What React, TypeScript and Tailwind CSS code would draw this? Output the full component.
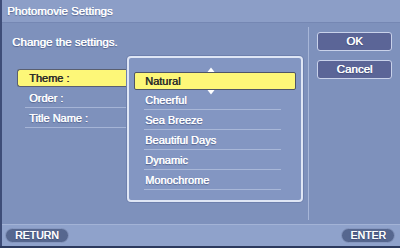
import React from "react";

const font = { fontFamily: '"Liberation Sans", Arial, sans-serif' };
const wt = "[text-shadow:0.45px_0_0_#ffffff,0_1px_1px_rgba(40,50,90,0.55)]";
const wtDark = "[text-shadow:0.45px_0_0_#2a2a2a]";

export default function App() {
  const themes = ["Natural", "Cheerful", "Sea Breeze", "Beautiful Days", "Dynamic", "Monochrome"];
  return (
    <div style={font} className="w-[400px] h-[248px] bg-[#2c3a5e] overflow-hidden">
      <div className="w-[400px] h-[246px] flex flex-col bg-[#7e91bc] border-l-2 border-[#3e4d78]">
        {/* title */}
        <div className={`h-[23px] bg-[#8c9ec7] border-b border-[#7587b3] flex items-center pl-[5px] pt-[2px] text-[11.5px] text-white ${wt}`}>
          Photomovie Settings
        </div>
        <div className="flex flex-1">
          {/* main area */}
          <div className="w-[306px] relative">
            <div className={`pl-[10px] pt-[11px] text-[11.5px] text-white ${wt}`}>Change the settings.</div>
            <div className="mt-[18px] ml-[15px] w-[110px] flex flex-col">
              <div className={`h-[18px] bg-[#fdf778] rounded-l-[3px] border border-[#5a5f70] border-r-0 flex items-center pl-[11px] text-[11px] text-[#2a2a2a] ${wtDark}`}>
                Theme :
              </div>
              <div className={`h-[20px] mt-[1px] ml-[8px] border-b border-[#a5b4d6] flex items-center pl-[4px] text-[11px] text-white ${wt}`}>Order :</div>
              <div className={`h-[20px] ml-[8px] border-b border-[#a5b4d6] flex items-center pl-[4px] text-[11px] text-white ${wt}`}>Title Name :</div>
            </div>
            {/* dropdown */}
            <div className="absolute left-[125px] top-[33px] w-[176px] h-[146px] rounded-[4px] border-2 border-[#dfe6f5] bg-[#8396c2] shadow-[0_0_0_1px_#6e80ad] pt-[14px] px-[5px]">
              <div className={`relative h-[18px] bg-[#fdf778] border border-[#4f5566] rounded-[2px] flex items-center pl-[10px] text-[11px] text-[#2a2a2a] ${wtDark}`}>
                Natural
                <svg className="absolute left-[72px] -top-[6px]" width="8" height="5" viewBox="0 0 8 5">
                  <path d="M0.5 5 L4 0.5 L7.5 5 Z" fill="#ffffff" />
                </svg>
                <svg className="absolute left-[72px] -bottom-[6px]" width="8" height="5" viewBox="0 0 8 5">
                  <path d="M0.5 0 L4 4.5 L7.5 0 Z" fill="#ffffff" />
                </svg>
              </div>
              {themes.slice(1).map((t) => (
                <div key={t} className={`h-[20px] ml-[10px] mr-[15px] border-b border-[#a8b7d8] flex items-center pl-[1px] pt-[1px] text-[11px] text-white ${wt}`}>
                  {t}
                </div>
              ))}
            </div>
          </div>
          {/* separator */}
          <div className="w-px bg-[#a7b6d8] mb-[4px] mt-[4px]" />
          {/* buttons */}
          <div className="flex flex-col pl-[8px] pt-[9px] gap-[9px]">
            <div className={`w-[75px] h-[19px] rounded-[3px] bg-[#5b6597] border border-[#c9d2ea] flex items-center justify-center text-[11.5px] text-white ${wt}`}>OK</div>
            <div className={`w-[75px] h-[19px] rounded-[3px] bg-[#5b6597] border border-[#c9d2ea] flex items-center justify-center text-[11.5px] text-white ${wt}`}>Cancel</div>
          </div>
        </div>
        {/* bottom bar */}
        <div className="h-[22px] bg-[#8fa2cb] border-t border-[#a3b3d6] flex items-center justify-between pl-[3px] pr-[5px]">
          <div className={`h-[15px] px-[9px] rounded-full bg-[#56678f] border border-[#8697bf] flex items-center text-[10.5px] text-white ${wt}`}>RETURN</div>
          <div className={`h-[15px] px-[8px] rounded-full bg-[#56678f] border border-[#8697bf] flex items-center text-[10.5px] text-white ${wt}`}>ENTER</div>
        </div>
      </div>
    </div>
  );
}
